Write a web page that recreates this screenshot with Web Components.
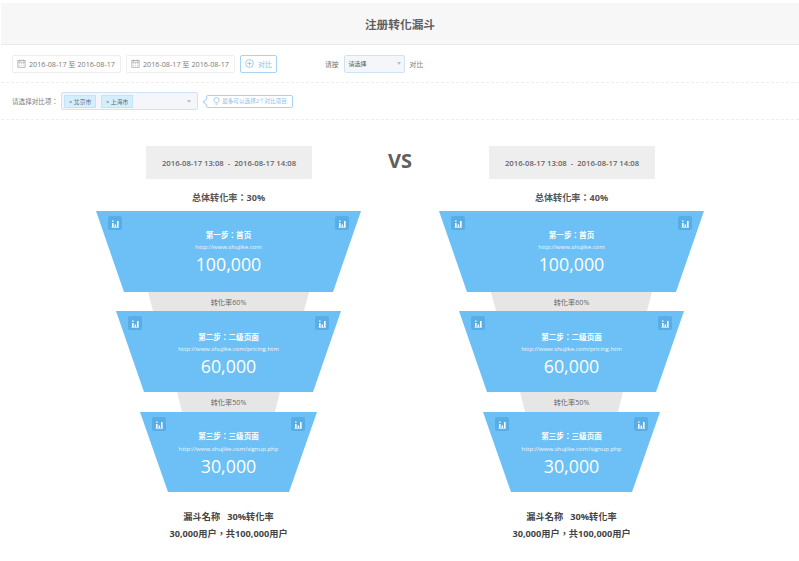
<!DOCTYPE html>
<html lang="zh-Hant"><head><meta charset="utf-8"><style>
html,body{margin:0;background:#fff}
body{width:799px;height:561px;overflow:hidden;font-family:"Open Sans","Noto Sans CJK TC",sans-serif;color:#555}
</style></head><body>
<app-page>
  <top-bar slot="head">注册转化漏斗</top-bar>
  <tool-bar slot="tools"></tool-bar>
  <filter-bar slot="tools"></filter-bar>
  <funnel-panel slot="left" range="2016-08-17 13:08  -  2016-08-17 14:08" rate="30%"></funnel-panel>
  <funnel-panel slot="right" range="2016-08-17 13:08  -  2016-08-17 14:08" rate="40%"></funnel-panel>
</app-page>
<script>
const cal=`<svg width="9" height="9" viewBox="0 0 10 10" fill="none" stroke="#aaa" stroke-width=".9"><rect x="1" y="1.6" width="8" height="7.6"/><path d="M1 3.6h8M3 .6v2M7 .6v2"/><path d="M2.400 5h1M4.500 5h1M6.600 5h1M2.400 7h1M4.500 7h1M6.600 7h1" stroke-width=".7"/></svg>`;
function el(name,html){customElements.define(name,class extends HTMLElement{constructor(){super();this.attachShadow({mode:'open'}).innerHTML=typeof html==='function'?html(this):html}})}
el('app-page',`<style>:host{display:block;height:561px}
.head{margin:3px 0 0 1px}
.main{display:flex;justify-content:center;padding:26px 0 0 1px}
.vs{width:0;display:flex;justify-content:center;height:33px;align-items:center}
.vs span{font:700 20px "Open Sans",sans-serif;color:#606060;white-space:nowrap;position:relative;top:-2px}
</style><div class="head"><slot name="head"></slot><slot name="tools"></slot></div>
<div class="main"><slot name="left"></slot><div class="vs"><span>VS</span></div><slot name="right"></slot></div>`);
el('top-bar',`<style>:host{display:flex;align-items:center;justify-content:center;height:41px;background:#f7f7f7;border-bottom:1px solid #e9e9e9;font-size:11.7px;font-weight:700;color:#606060}</style><slot></slot>`);
el('date-range',`<style>:host{display:inline-flex;align-items:center;gap:3px;box-sizing:border-box;width:109px;height:18px;border:1px solid #eee;border-radius:2px;padding-left:4px;font-size:7.2px;color:#7a7a7a;white-space:nowrap}
svg{flex:none}</style>${cal}<span>2016-08-17 至 2016-08-17</span>`);
el('tool-bar',`<style>:host{display:flex;align-items:center;box-sizing:border-box;height:38px;padding:0 0 0 11px;border-bottom:1px dashed #eee;font-size:6.8px;color:#777}
date-range+date-range{margin-left:5px}
.add{margin-left:5px;box-sizing:border-box;width:37px;height:18px;border:1px solid #a9d3f5;border-radius:2px;display:flex;align-items:center;justify-content:center;gap:4px;color:#8cc0ee;font-size:7px}
.sel{box-sizing:border-box;width:61px;height:18px;margin:0 5px 0 5px;border:1px solid #cfe3f6;border-radius:2px;background:#f4f6f9;display:flex;align-items:center;justify-content:space-between;padding:0 3px 0 4px;color:#555;font-size:6px}
.arrow{width:0;height:0;border:2.500px solid transparent;border-top:3px solid #a9c4dc;border-bottom:0}
.by{margin-left:48px}</style>
<date-range></date-range><date-range></date-range>
<div class="add"><svg width="9" height="9" viewBox="0 0 9 9" fill="none" stroke="#8cc0ee" stroke-width=".8"><circle cx="4.500" cy="4.500" r="3.900"/><path d="M2.400 4.500h4.200M4.500 2.400v4.200"/></svg><span>对比</span></div>
<span class="by">请按</span><div class="sel"><span>请选择</span><i class="arrow"></i></div><span>对比</span>`);
el('filter-bar',`<style>:host{display:flex;align-items:center;box-sizing:border-box;height:37px;padding-left:11px;border-bottom:1px dashed #eee;font-size:6.600px;color:#777}
.box{box-sizing:border-box;margin-left:3px;width:137px;height:18px;border:1px solid #cfe3f6;border-radius:2px;background:#f4f6f9;display:flex;align-items:center;gap:5px;padding-left:2px;position:relative;font-size:5.800px}
.tag{box-sizing:border-box;width:32px;height:13px;background:#d4eefb;border:1px solid #bfe6f8;display:flex;align-items:center;justify-content:center;color:#667}
.arrow{position:absolute;right:6px;top:7px;width:0;height:0;border:2.500px solid transparent;border-top:3px solid #a9c4dc;border-bottom:0}
.tip{position:relative;box-sizing:border-box;margin-left:8px;width:87px;height:13px;border:1px solid #a9d3f5;border-radius:2px;display:flex;align-items:center;gap:2px;padding-left:6px;color:#8cc0ee;font-size:5.600px;white-space:nowrap}
.tip:before{content:"";position:absolute;left:-3.500px;top:3px;width:5px;height:5px;background:#fff;border-left:1px solid #a9d3f5;border-bottom:1px solid #a9d3f5;transform:rotate(45deg)}</style>
<span>请选择对比项：</span><div class="box"><span class="tag">× 北京市</span><span class="tag">× 上海市</span><i class="arrow"></i></div>
<div class="tip"><svg width="7" height="8" viewBox="0 0 7 8" fill="none" stroke="#8cc0ee" stroke-width=".8"><path d="M2.300 5.600C1.400 5 .9 4.200.9 3.300a2.600 2.600 0 0 1 5.200 0c0 .9-.5 1.700-1.400 2.300zM2.500 7.200h2"/></svg><span>最多可以选择2个对比项目</span></div>`);
el('chart-btn',`<style>:host{display:flex;align-items:center;justify-content:center;width:14px;height:14px;border-radius:2px;background:#57aee6}</style>
<svg width="9" height="9" viewBox="0 0 9 9" fill="#fff"><rect x="1" y="1.500" width="1.600" height="1.200"/><rect x="1" y="4" width="1.600" height="4"/><rect x="3.600" y="5.500" width="1.500" height="2.500"/><rect x="6" y="2" width="1.600" height="6"/><rect x=".5" y="8" width="7.500" height=".6"/></svg>`);
el('funnel-step',t=>{const g=k=>t.getAttribute(k);return `<style>:host{display:block;position:relative;box-sizing:border-box;height:${g('h')}px;width:${g('w')}px;color:#fff;text-align:center;background:#6cc0f5;clip-path:polygon(0 0,100% 0,calc(100% - 28px) 100%,28px 100%)}
.i{position:absolute;top:5px}
.t{padding-top:${g('pad')}px;font-size:7.600px;font-weight:700;line-height:12px}
.u{font-size:6px;line-height:9px;margin-top:${g('gap')}px;color:#f0f8fe}
.n{font-size:17.800px;line-height:26px;margin-top:-1px}</style>
<chart-btn class="i" style="left:12px"></chart-btn><chart-btn class="i" style="right:12px"></chart-btn>
<div class="t">${g('title')}</div><div class="u">${g('url')}</div><div class="n">${g('num')}</div>`});
el('funnel-link',t=>{const w=t.getAttribute('w');return `<style>:host{display:flex;align-items:center;justify-content:center;width:${w}px;background:#e6e6e6;clip-path:polygon(0 0,100% 0,calc(100% - 5px) 100%,5px 100%);font-size:7.200px;color:#666}</style><slot></slot>`});
el('funnel-panel',t=>{const g=k=>t.getAttribute(k);return `<style>:host{display:flex;flex-direction:column;align-items:center;width:343px}
.d{box-sizing:border-box;width:166px;height:33px;margin-left:1px;background:#eee;border-radius:1px;display:flex;align-items:center;justify-content:center;font-size:7.700px;font-weight:600;color:#666;white-space:pre}
.r{box-sizing:border-box;height:32px;padding-top:3px;display:flex;align-items:center;font-size:9.100px;font-weight:700;color:#555}
.f{margin-top:16px;font-size:9.200px;font-weight:700;color:#444;line-height:17px;text-align:center;white-space:pre}</style>
<div class="d">${g('range')}</div><div class="r">总体转化率：${g('rate')}</div>
<funnel-step w="265" h="81" pad="18" gap="2" title="第一步：首页" url="http://www.shujike.com" num="100,000"></funnel-step>
<funnel-link w="161" style="height:19px">转化率60%</funnel-link>
<funnel-step w="225" h="81" pad="20" gap="2" title="第二步：二级页面" url="http://www.shujike.com/pricing.htm" num="60,000"></funnel-step>
<funnel-link w="103" style="height:20px">转化率50%</funnel-link>
<funnel-step w="177" h="80" pad="18" gap="3" title="第三步：三级页面" url="http://www.shujike.com/signup.php" num="30,000"></funnel-step>
<div class="f">漏斗名称   30%转化率
30,000用户，共100,000用户</div>`});
</script></body></html>
